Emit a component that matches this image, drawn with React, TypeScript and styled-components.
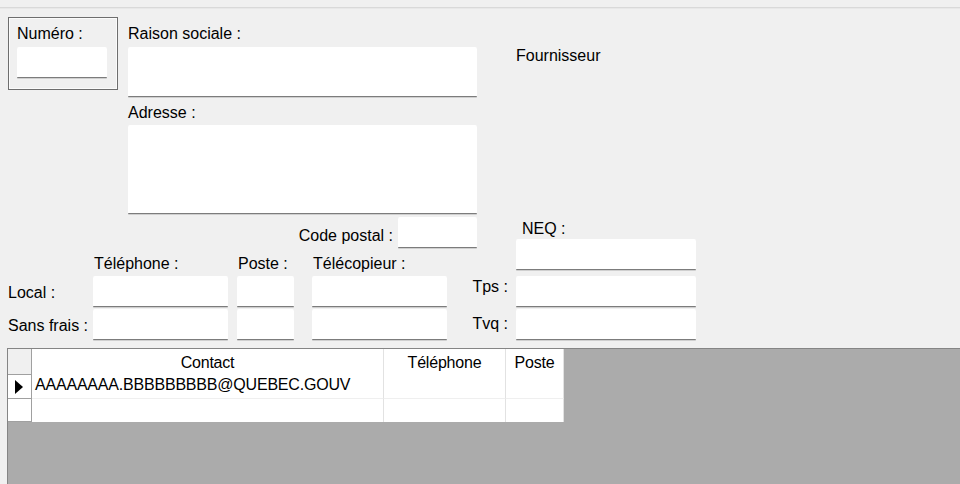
import React from 'react';
import styled, { createGlobalStyle, css } from 'styled-components';

const GlobalStyle = createGlobalStyle`
  html, body {
    margin: 0;
    padding: 0;
    background: #f0f0f0;
  }
`;

const Page = styled.div`
  width: 960px;
  height: 484px;
  overflow: hidden;
  display: flex;
  flex-direction: column;
  background: #f0f0f0;
  color: #000;
  font-family: 'Liberation Sans', Arial, sans-serif;
  font-size: 16px;
  line-height: 18px;
`;

const TopRule = styled.div`
  margin-top: 7px;
  border-top: 1px solid #d9d9d9;
  border-bottom: 1px solid #e8e8e8;
`;

const Form = styled.div`
  display: flex;
  align-items: flex-start;
  padding: 8px 0 0 8px;
`;

const LeftCol = styled.div`
  display: flex;
  flex-direction: column;
  width: 469px;
`;

const TopBlock = styled.div`
  display: flex;
  align-items: flex-start;
`;

const NumberGroup = styled.div`
  box-sizing: border-box;
  display: flex;
  flex-direction: column;
  align-items: flex-start;
  width: 110px;
  height: 73px;
  padding: 7px 0 0 8px;
  border: 1px solid #6e6e6e;
  box-shadow: inset 1px 1px 0 #fbfbfb, inset -1px -1px 0 #fbfbfb;
`;

const IdentityCol = styled.div`
  display: flex;
  flex-direction: column;
  width: 349px;
  margin-left: 10px;
  padding-top: 8px;
`;

const Label = styled.span<{ $mt?: number; $pl?: number }>`
  display: block;
  white-space: nowrap;
  margin-top: ${p => p.$mt ?? 0}px;
  padding-left: ${p => p.$pl ?? 0}px;
`;

const RowLabel = styled(Label)<{ $col?: number }>`
  grid-column: ${p => p.$col ?? 1};
  justify-self: ${p => (p.$col === 1 ? 'end' : 'start')};
  margin-top: 8px;
  padding-right: ${p => (p.$col === 1 ? 4 : 0)}px;
`;

const ColumnHeading = styled(Label)<{ $col: number }>`
  grid-column: ${p => p.$col};
  padding-left: 1px;
`;

const fieldLook = css`
  box-sizing: border-box;
  display: block;
  margin: 0;
  padding: 0 3px;
  border: none;
  border-bottom: 1px solid #7c7c7c;
  border-radius: 2px 2px 1px 1px;
  background: #fff;
  box-shadow: 0 1px 0 #cfcfcf;
  font: inherit;
  color: inherit;
  outline: none;
`;

type FieldProps = { $w?: number; $h?: number; $mt?: number; $col?: number };

const TextBox = styled.input.attrs({ type: 'text', readOnly: true })<FieldProps>`
  ${fieldLook}
  width: ${p => (p.$w ? `${p.$w}px` : '100%')};
  height: ${p => p.$h ?? 31}px;
  margin-top: ${p => p.$mt ?? 0}px;
  grid-column: ${p => p.$col ?? 'auto'};
`;

const TextArea = styled.textarea.attrs({ readOnly: true })<FieldProps>`
  ${fieldLook}
  width: 100%;
  height: ${p => p.$h ?? 31}px;
  margin-top: ${p => p.$mt ?? 0}px;
  resize: none;
  overflow: hidden;
`;

const PostalRow = styled.div`
  display: flex;
  justify-content: flex-end;
  align-items: flex-start;
  gap: 5px;
  margin-top: 3px;
`;

const PhoneGrid = styled.div`
  display: grid;
  grid-template-columns: 85px 135px 9px 57px 18px 135px;
  grid-template-rows: 21px 33px 31px;
  align-items: start;
  margin-top: 7px;
`;

const RightCol = styled.div`
  display: grid;
  grid-template-columns: 35px 180px;
  column-gap: 4px;
  align-items: start;
`;

const SideText = styled(Label)`
  grid-column: 2;
`;

const GridFrame = styled.div`
  flex: 1;
  margin: 8px -6px -6px 7px;
  border: 1px solid #858585;
  background: #ababab;
`;

const GridTable = styled.div`
  display: grid;
  grid-template-columns: 24px 352px 122px 58px;
  width: max-content;
  background: #fff;
  letter-spacing: -0.2px;
`;

const Corner = styled.div`
  box-sizing: border-box;
  height: 26px;
  background: #f0f0f0;
  border-right: 1px solid #a0a0a0;
  border-bottom: 1px solid #a0a0a0;
`;

const HeaderCell = styled.div`
  box-sizing: border-box;
  height: 26px;
  padding-top: 5px;
  text-align: center;
  white-space: nowrap;
  border-right: 1px solid #e2e2e2;
`;

const RowHeader = styled.div<{ $h: number }>`
  box-sizing: border-box;
  display: flex;
  align-items: center;
  height: ${p => p.$h}px;
  padding-left: 7px;
  border-right: 1px solid #a0a0a0;
  border-bottom: 1px solid #a0a0a0;
`;

const Cell = styled.div<{ $h: number; $last?: boolean }>`
  box-sizing: border-box;
  height: ${p => p.$h}px;
  padding: 1px 3px 0;
  white-space: nowrap;
  overflow: hidden;
  border-right: 1px solid #e2e2e2;
  border-bottom: ${p => (p.$last ? 'none' : '1px solid #efefef')};
`;

const CurrentRowArrow = () => (
  <svg width="8" height="14" viewBox="0 0 8 14">
    <polygon points="0,0 8,7 0,14" fill="#000" />
  </svg>
);

const contacts = [
  { contact: 'AAAAAAAA.BBBBBBBBB@QUEBEC.GOUV', telephone: '', poste: '' },
  { contact: '', telephone: '', poste: '' },
];

export default function App() {
  return (
    <Page>
      <GlobalStyle />
      <TopRule />
      <Form>
        <LeftCol>
          <TopBlock>
            <NumberGroup>
              <Label>Numéro :</Label>
              <TextBox $w={90} $mt={4} />
            </NumberGroup>
            <IdentityCol>
              <Label>Raison sociale :</Label>
              <TextArea $h={50} $mt={4} />
              <Label $mt={7}>Adresse :</Label>
              <TextArea $h={89} $mt={3} />
              <PostalRow>
                <Label $mt={10}>Code postal :</Label>
                <TextBox $w={79} />
              </PostalRow>
            </IdentityCol>
          </TopBlock>
          <PhoneGrid>
            <ColumnHeading $col={2}>Téléphone :</ColumnHeading>
            <ColumnHeading $col={4}>Poste :</ColumnHeading>
            <ColumnHeading $col={6}>Télécopieur :</ColumnHeading>

            <RowLabel>Local :</RowLabel>
            <TextBox $col={2} />
            <TextBox $col={4} />
            <TextBox $col={6} />

            <RowLabel>Sans frais :</RowLabel>
            <TextBox $col={2} />
            <TextBox $col={4} />
            <TextBox $col={6} />
          </PhoneGrid>
        </LeftCol>
        <RightCol>
          <SideText $mt={30}>Fournisseur</SideText>
          <SideText $mt={155} $pl={6}>NEQ :</SideText>
          <TextBox $col={2} $mt={1} />

          <RowLabel $col={1}>Tps :</RowLabel>
          <TextBox $col={2} $mt={6} />

          <RowLabel $col={1}>Tvq :</RowLabel>
          <TextBox $col={2} $mt={2} />
        </RightCol>
      </Form>
      <GridFrame>
        <GridTable>
          <Corner />
          <HeaderCell>Contact</HeaderCell>
          <HeaderCell>Téléphone</HeaderCell>
          <HeaderCell>Poste</HeaderCell>
          {contacts.map((row, i) => {
            const last = i === contacts.length - 1;
            const h = last ? 23 : 24;
            return (
              <React.Fragment key={i}>
                <RowHeader $h={h}>{i === 0 && <CurrentRowArrow />}</RowHeader>
                <Cell $h={h} $last={last}>{row.contact}</Cell>
                <Cell $h={h} $last={last}>{row.telephone}</Cell>
                <Cell $h={h} $last={last}>{row.poste}</Cell>
              </React.Fragment>
            );
          })}
        </GridTable>
      </GridFrame>
    </Page>
  );
}
